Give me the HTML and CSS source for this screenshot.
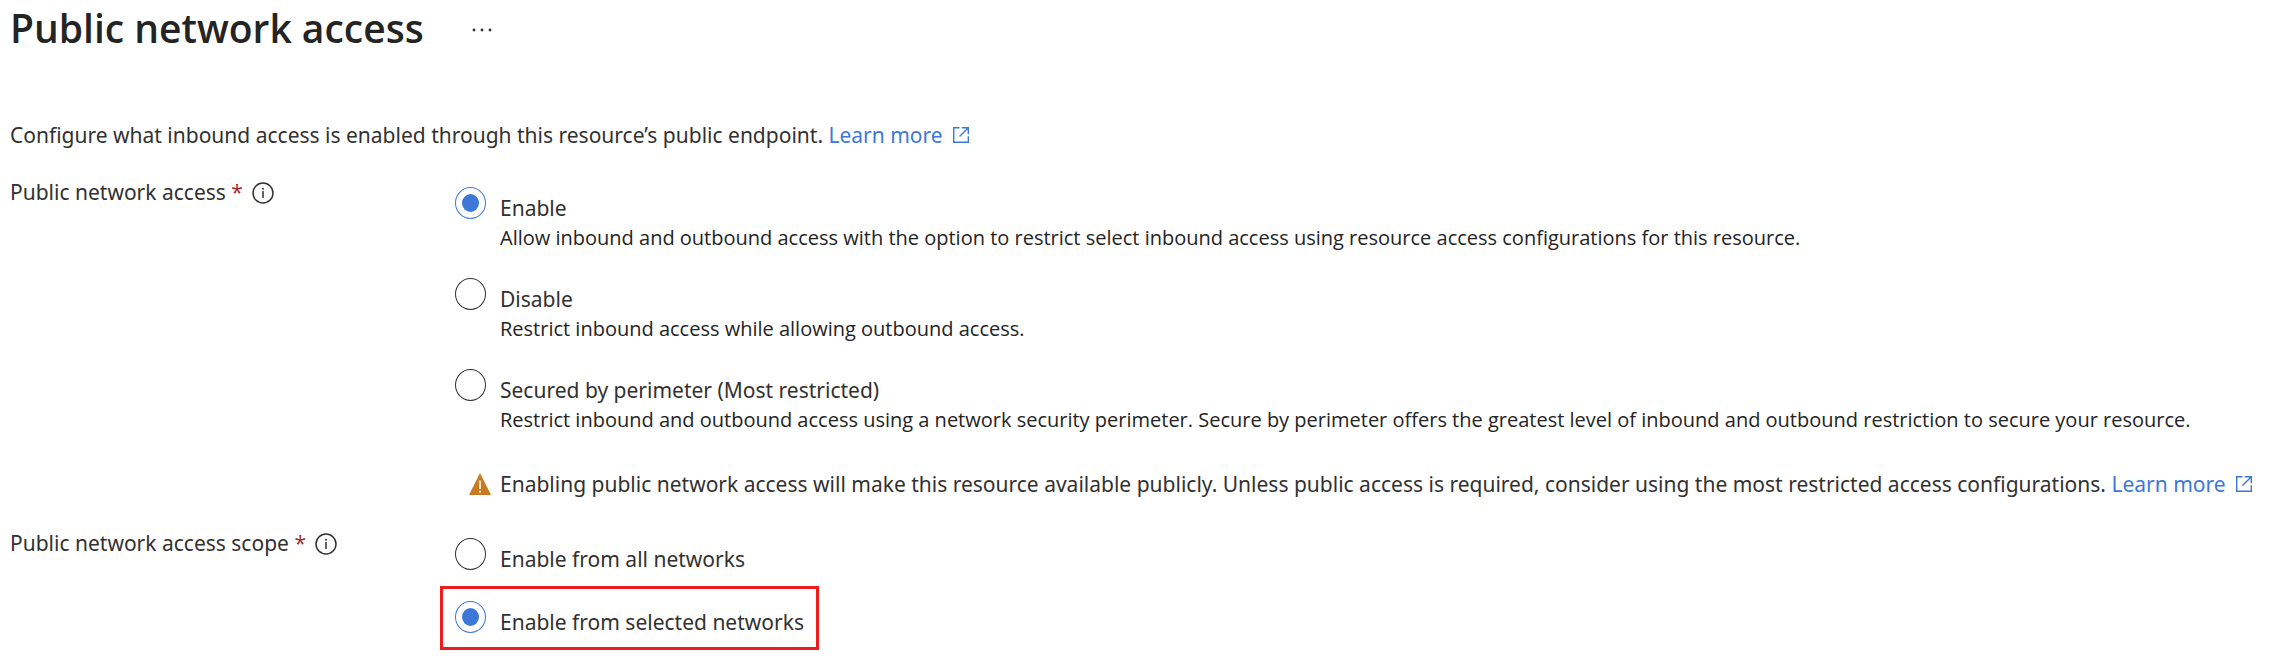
FILE: index.html
```html
<!DOCTYPE html>
<html lang="en">
<head>
    <meta charset="UTF-8">
    <meta name="viewport" content="width=device-width, initial-scale=1.0">
    <title>Public network access</title>
    <link rel="stylesheet" href="styles.css">
</head>
<body>
    <svg class="sprite" aria-hidden="true">
        <symbol id="icon-info" viewBox="0 0 22 22">
            <circle cx="11" cy="11" r="10" fill="none" stroke="currentColor" stroke-width="1.5"/>
            <path d="M11 9v7" fill="none" stroke="currentColor" stroke-width="1.5"/>
            <circle cx="11" cy="6.7" r="1" fill="currentColor"/>
        </symbol>
        <symbol id="icon-external" viewBox="0 0 18 18">
            <path d="M7.5 1.7H1.7v14.6h14.6v-6M9.8 1.7h6.5v6.5M16.3 1.7L7.5 10.5" fill="none" stroke="currentColor" stroke-width="1.4"/>
        </symbol>
        <symbol id="icon-warning" viewBox="0 0 22 22">
            <path d="M11 0l11 22H0z" fill="#c87a20"/>
            <path d="M11 7.5v8.5M11 17.7v2" fill="none" stroke="#fff" stroke-width="1.6"/>
        </symbol>
    </svg>

    <header class="page-header">
        <h1 class="page-title">Public network access</h1>
        <button class="more-btn" type="button" aria-label="More actions">
            <svg viewBox="0 0 20 4" width="20" height="4">
                <circle cx="2" cy="2" r="1.4"/>
                <circle cx="10" cy="2" r="1.4"/>
                <circle cx="18" cy="2" r="1.4"/>
            </svg>
        </button>
    </header>

    <main class="content">
        <p class="intro">Configure what inbound access is enabled through this resource’s public endpoint. <a class="link" href="#">Learn more<svg class="external"><use href="#icon-external"/></svg></a></p>

        <div class="field" role="radiogroup" aria-labelledby="access-label">
            <div class="field-label">
                <span id="access-label">Public network access <span class="required">*</span></span>
                <svg class="info"><use href="#icon-info"/></svg>
            </div>
            <div class="options">
                <label class="option">
                    <input class="radio" type="radio" name="access" checked>
                    <span class="option-text">Enable
                        <span class="option-desc">Allow inbound and outbound access with the option to restrict select inbound access using resource access configurations for this resource.</span>
                    </span>
                </label>
                <label class="option">
                    <input class="radio" type="radio" name="access">
                    <span class="option-text">Disable
                        <span class="option-desc">Restrict inbound access while allowing outbound access.</span>
                    </span>
                </label>
                <label class="option">
                    <input class="radio" type="radio" name="access">
                    <span class="option-text">Secured by perimeter (Most restricted)
                        <span class="option-desc">Restrict inbound and outbound access using a network security perimeter. Secure by perimeter offers the greatest level of inbound and outbound restriction to secure your resource.</span>
                    </span>
                </label>
                <div class="warning">
                    <svg class="warning-icon"><use href="#icon-warning"/></svg>
                    <p>Enabling public network access will make this resource available publicly. Unless public access is required, consider using the most restricted access configurations. <a class="link" href="#">Learn more<svg class="external"><use href="#icon-external"/></svg></a></p>
                </div>
            </div>
        </div>

        <div class="field" role="radiogroup" aria-labelledby="scope-label">
            <div class="field-label">
                <span id="scope-label">Public network access scope <span class="required">*</span></span>
                <svg class="info"><use href="#icon-info"/></svg>
            </div>
            <div class="options scope">
                <label class="option">
                    <input class="radio" type="radio" name="scope">
                    <span class="option-text">Enable from all networks</span>
                </label>
                <label class="option highlighted">
                    <input class="radio" type="radio" name="scope" checked>
                    <span class="option-text">Enable from selected networks</span>
                </label>
            </div>
        </div>
    </main>
</body>
</html>
```
FILE: styles.css
```css
:root {
    --text-color: #323130;
    --link-color: #3d78d8;
    --required-color: #a4262c;
    --highlight-color: #ee1c1c;
}

* {
    box-sizing: border-box;
    margin: 0;
    padding: 0;
}

body {
    font-family: 'Noto Sans', 'Open Sans', sans-serif;
    font-size: 21px;
    line-height: 30px;
    color: var(--text-color);
    background-color: #fff;
}

.sprite {
    display: none;
}

.page-header {
    display: flex;
    align-items: center;
    gap: 38px;
    padding: 0 10px;
}

.page-title {
    font-family: 'Open Sans', 'Noto Sans', sans-serif;
    font-size: 39px;
    line-height: 56px;
    font-weight: 600;
    color: #242424;
}

.more-btn {
    display: flex;
    padding: 12px 10px 8px;
    border: none;
    background: none;
    fill: var(--text-color);
    cursor: pointer;
}

.content {
    padding: 64px 6px 0 10px;
}

.intro {
    margin-bottom: 27px;
}

.link {
    color: var(--link-color);
    text-decoration: none;
}

.link:hover {
    text-decoration: underline;
}

.external {
    width: 18px;
    height: 18px;
    margin-left: 9px;
    vertical-align: -1px;
}

.field {
    display: grid;
    grid-template-columns: 445px 1fr;
}

.field-label {
    display: flex;
    align-items: center;
    align-self: start;
    gap: 9px;
}

.required {
    font-family: 'Open Sans', 'Noto Sans', sans-serif;
    color: var(--required-color);
}

.info {
    width: 22px;
    height: 22px;
    margin-top: 2px;
}

.options {
    padding-top: 10px;
}

.option {
    display: flex;
    align-items: flex-start;
    gap: 14px;
    margin-bottom: 25px;
    cursor: pointer;
}

.radio {
    appearance: none;
    flex: none;
    width: 31px;
    height: 32px;
    border: 1px solid var(--text-color);
    border-radius: 50%;
    cursor: pointer;
}

.radio:checked {
    padding: 6px;
    border-color: var(--link-color);
    background-color: var(--link-color);
    background-clip: content-box;
}

.option-text {
    padding-top: 6px;
}

.option-desc {
    display: block;
    font-family: 'Open Sans', 'Noto Sans', sans-serif;
    font-size: 20px;
    color: #242424;
}

.warning {
    display: flex;
    align-items: center;
    gap: 9px;
    padding-left: 14px;
    margin: 34px 0 29px;
}

.warning-icon {
    flex: none;
    width: 22px;
    height: 22px;
}

.scope .option {
    margin-bottom: 12px;
}

.scope .highlighted {
    width: fit-content;
    margin-left: -15px;
    padding: 12px 12px 10px;
    border: 3px solid var(--highlight-color);
}
```
